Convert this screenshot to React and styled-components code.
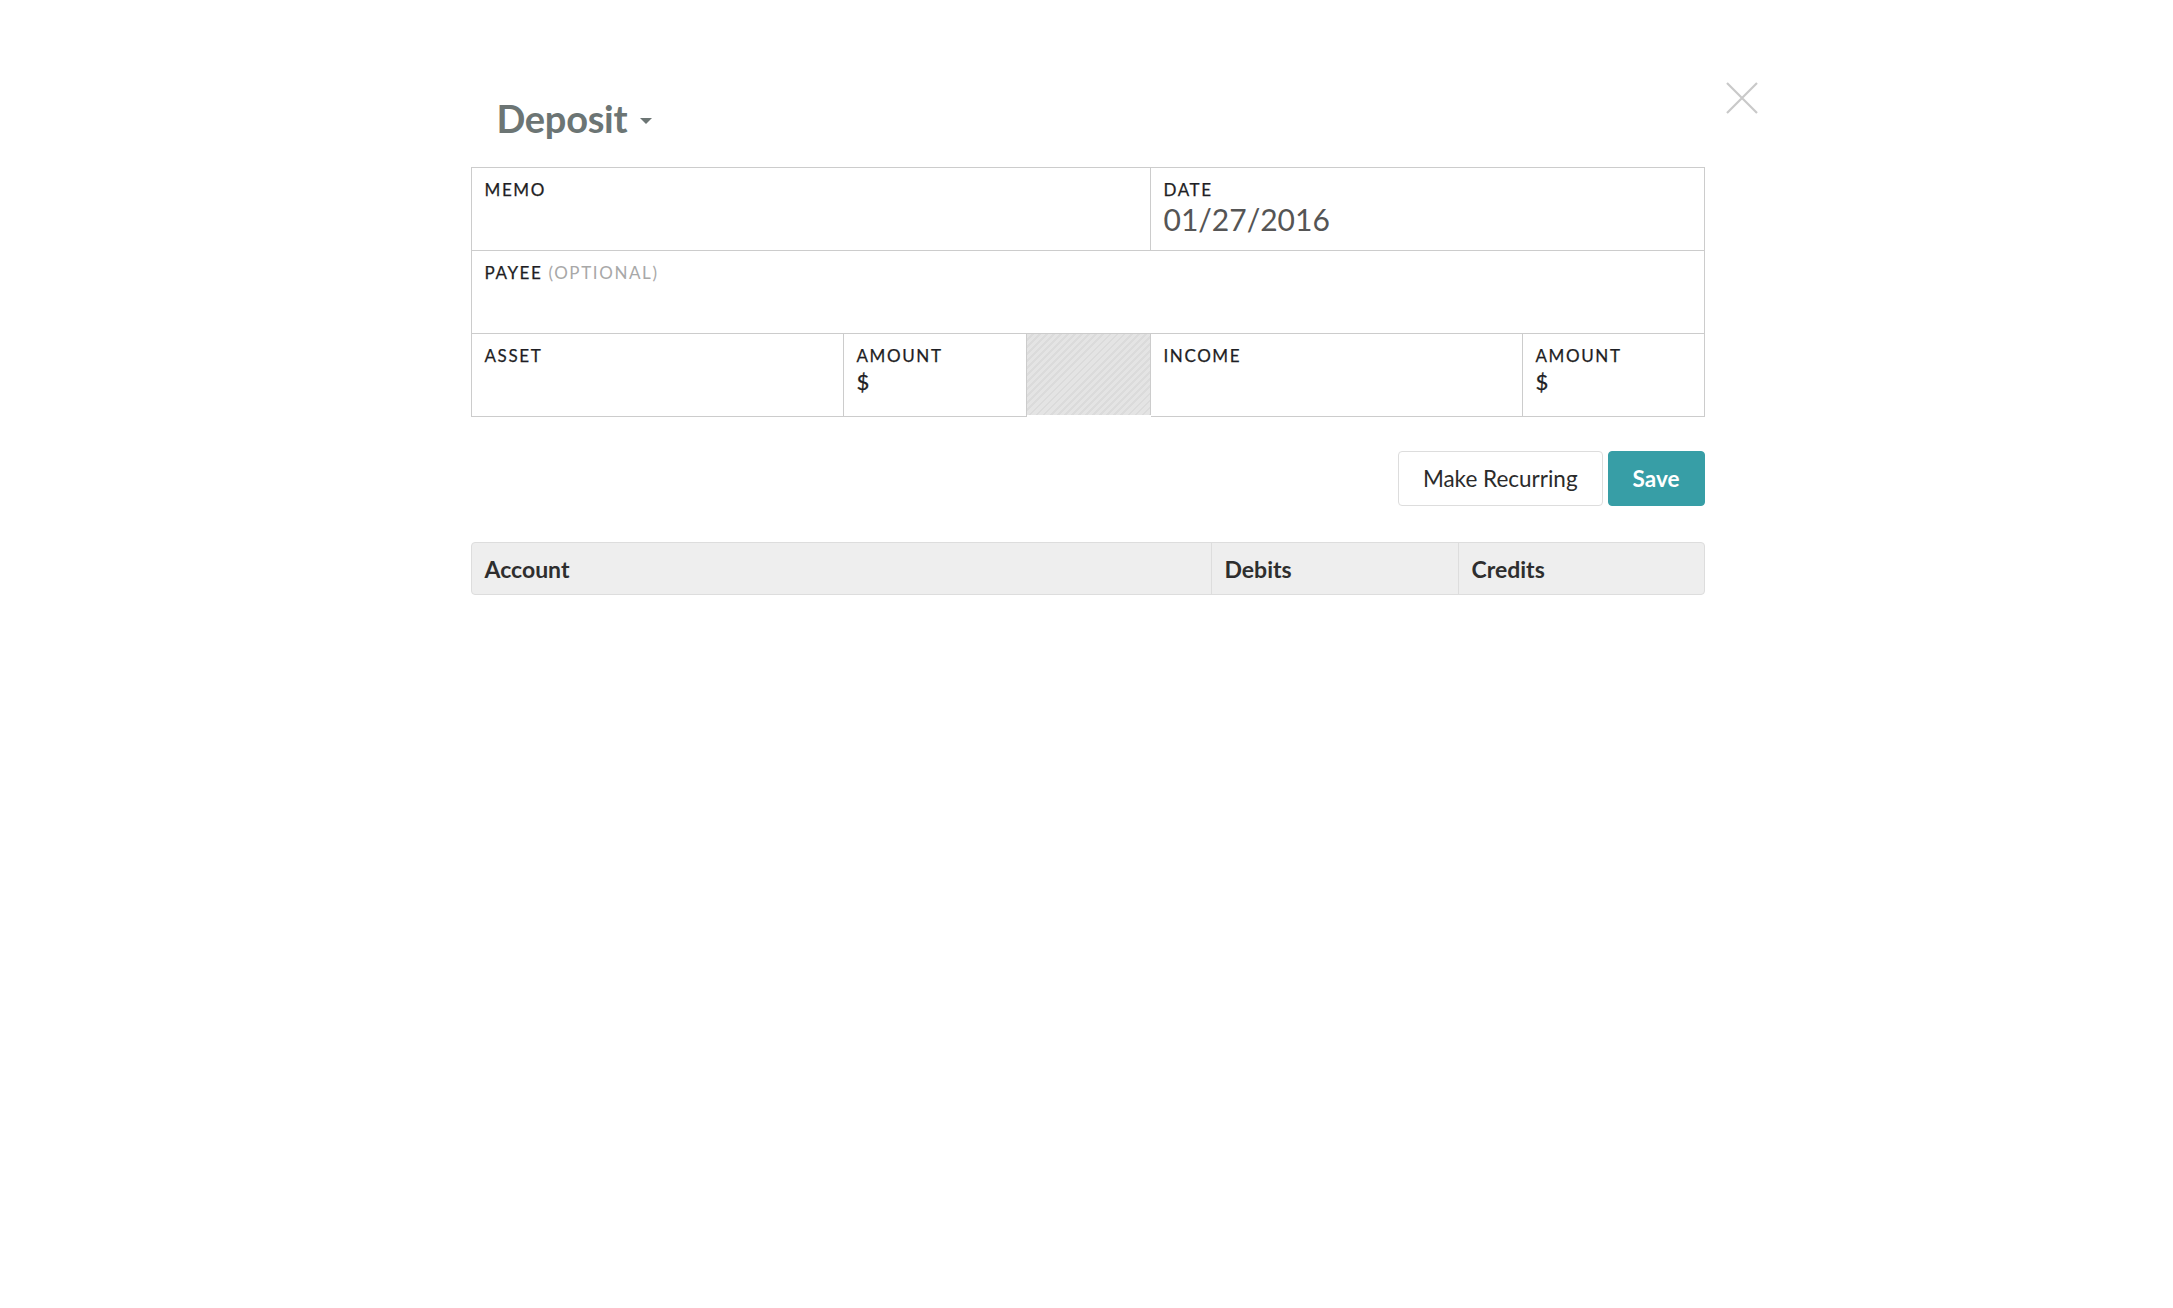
import React from 'react'
import styled, {createGlobalStyle} from 'styled-components'

//STYLING
const GlobalStyle = createGlobalStyle`
  html, body {
    margin: 0;
    padding: 0;
    background: #ffffff;
    font-family: Lato, "Open Sans", "Liberation Sans", sans-serif;
    color: #222;
  }
  * {
    box-sizing: border-box;
  }
`

const ModalWrapper = styled.div`
  width: 1234px;
  margin-left: calc(50% - 616px);
  padding-top: 82px;
`

const ModalHeader = styled.div`
  display: flex;
  align-items: flex-start;
  justify-content: space-between;
  margin-bottom: 30px;
`

const TypeToggle = styled.button`
  display: flex;
  align-items: center;
  gap: 13px;
  margin-top: 17px;
  margin-left: 26px;
  padding: 0;
  border: none;
  background: none;
  cursor: pointer;
  font-family: inherit;
  font-size: 38px;
  line-height: 38px;
  font-weight: 700;
  color: #6c7574;
  letter-spacing: -0.3px;
`

const Caret = styled.span`
  display: block;
  width: 0;
  height: 0;
  margin-top: 6px;
  border-left: 6px solid transparent;
  border-right: 6px solid transparent;
  border-top: 6px solid #6c7574;
`

const CloseButton = styled.button`
  display: block;
  width: 32px;
  height: 32px;
  padding: 0;
  margin-right: -53px;
  border: none;
  background: none;
  cursor: pointer;
`

const Form = styled.div`
  border-top: 1px solid #cccccc;
  border-left: 1px solid #cccccc;
`

const FormRow = styled.div`
  display: grid;
  grid-template-columns: ${props => props.columns};
`

const Cell = styled.div`
  height: 83px;
  padding: 13px 13px 0 13px;
  border-right: 1px solid #cccccc;
  border-bottom: 1px solid #cccccc;
  display: flex;
  flex-direction: column;
`

const HatchedCell = styled.div`
  height: 81px;
  border-right: 1px solid #cccccc;
  background: repeating-linear-gradient(
    135deg,
    #e4e4e4 0px,
    #e4e4e4 3px,
    #dbdbdb 3px,
    #dbdbdb 5px
  );
`

const Label = styled.div`
  font-size: 17px;
  line-height: 17px;
  letter-spacing: 1.6px;
  text-transform: uppercase;
  color: #1e1e24;
  -webkit-text-stroke: 0.25px #1e1e24;
`

const Optional = styled.span`
  color: #a8a8a8;
  -webkit-text-stroke: 0;
`

const DateValue = styled.div`
  margin-top: 6px;
  font-size: 30px;
  line-height: 30px;
  color: #555555;
`

const Currency = styled.div`
  margin-top: 7px;
  font-size: 22px;
  line-height: 21px;
  color: #1e1e24;
  -webkit-text-stroke: 0.3px #1e1e24;
`

const Actions = styled.div`
  display: flex;
  justify-content: flex-end;
  gap: 5px;
  margin-top: 34px;
  margin-bottom: 36px;
`

const Button = styled.button`
  height: 55px;
  padding: 0 24px;
  border-radius: 4px;
  font-family: inherit;
  font-size: 22.5px;
  cursor: pointer;
  border: 1px solid ${props => props.primary ? '#379ea6' : '#dddddd'};
  background: ${props => props.primary ? '#379ea6' : '#ffffff'};
  color: ${props => props.primary ? '#ffffff' : '#2b2b2b'};
  font-weight: ${props => props.primary ? 700 : 400};
`

const LinesTable = styled.div`
  display: grid;
  grid-template-columns: 739px 247px 1fr;
  background: #eeeeee;
  border: 1px solid #dddddd;
  border-radius: 4px;
`

const LinesHeader = styled.div`
  height: 51px;
  display: flex;
  align-items: center;
  padding-left: 13px;
  font-size: 23px;
  font-weight: 700;
  color: #2e2e2e;
  border-left: ${props => props.first ? 'none' : '1px solid #dddddd'};
`

export default function App() {
  return (
    <ModalWrapper>
      <GlobalStyle />
      <ModalHeader>
        <TypeToggle>
          Deposit
          <Caret />
        </TypeToggle>
        <CloseButton aria-label="Close">
          <svg width="32" height="32" viewBox="0 0 32 32">
            <path d="M1 1 L31 31 M31 1 L1 31" stroke="#c9c9c9" strokeWidth="2.2" fill="none" />
          </svg>
        </CloseButton>
      </ModalHeader>

      <Form>
        <FormRow columns="679px 1fr">
          <Cell>
            <Label>Memo</Label>
          </Cell>
          <Cell>
            <Label>Date</Label>
            <DateValue>01/27/2016</DateValue>
          </Cell>
        </FormRow>
        <FormRow columns="1fr">
          <Cell>
            <Label>Payee <Optional>(Optional)</Optional></Label>
          </Cell>
        </FormRow>
        <FormRow columns="372px 183px 124px 372px 1fr">
          <Cell>
            <Label>Asset</Label>
          </Cell>
          <Cell>
            <Label>Amount</Label>
            <Currency>$</Currency>
          </Cell>
          <HatchedCell />
          <Cell>
            <Label>Income</Label>
          </Cell>
          <Cell>
            <Label>Amount</Label>
            <Currency>$</Currency>
          </Cell>
        </FormRow>
      </Form>

      <Actions>
        <Button>Make Recurring</Button>
        <Button primary>Save</Button>
      </Actions>

      <LinesTable>
        <LinesHeader first>Account</LinesHeader>
        <LinesHeader>Debits</LinesHeader>
        <LinesHeader>Credits</LinesHeader>
      </LinesTable>
    </ModalWrapper>
  )
}
